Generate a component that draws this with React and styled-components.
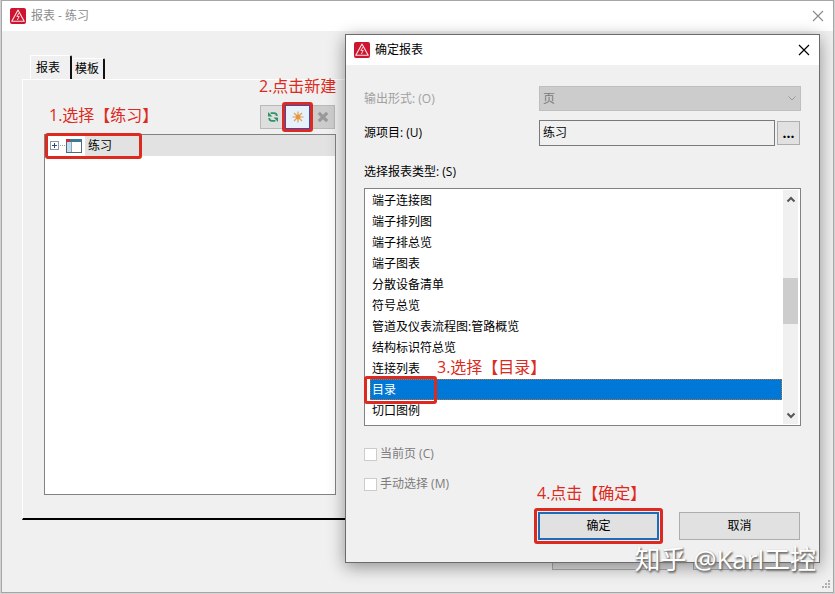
import React, { useState } from "react";
import styled, { createGlobalStyle, css } from "styled-components";

const GlobalStyle = createGlobalStyle`
  *, *::before, *::after { box-sizing: border-box; }
  body { margin: 0; background: #d2d2d2; }
  body, button, input, select {
    font-family: "Open Sans", "Noto Sans CJK SC", sans-serif;
    font-size: 12px;
    line-height: 18px;
  }
  body, button { color: #000; }
  h1, h2, ul { margin: 0; padding: 0; font: inherit; list-style: none; }
`;

const RED = "#dc2a20";

const MainWindow = styled.main`
  position: relative;
  display: flex;
  flex-direction: column;
  height: calc(100vh - 1px);
  min-height: 592px;
  margin: 0 1px 1px;
  border: 1px solid #a6a6a6;
  background: #f0f0f0;
  overflow: hidden;
`;

const TitleBar = styled.header`
  display: flex;
  align-items: center;
  gap: 5px;
  height: 30px;
  padding: 0 7px 0 8px;
  background: #fff;
  color: ${(p) => (p.$inactive ? "#8c8c8c" : "#000")};
  flex: none;
`;

const Title = styled.h1`
  flex: 1;
`;

const CloseButton = styled.button`
  display: flex;
  padding: 2px;
  border: 0;
  background: none;
  color: inherit;
`;

const Content = styled.div`
  display: flex;
  flex-direction: column;
  flex: 1;
  padding: 24px 19px 22px 20px;
`;

const TabStrip = styled.div`
  display: flex;
  align-items: flex-end;
  height: 24px;
  padding-left: 8px;
`;

const Tab = styled.button`
  height: ${(p) => (p.$active ? 24 : 21)}px;
  padding: ${(p) => (p.$active ? "0 10px 0 5px" : "0 4px 0 3px")};
  border: solid #fff;
  border-width: 1px 2px 0 ${(p) => (p.$active ? 1 : 0)}px;
  border-right-color: #111;
  border-radius: 2px 2px 0 0;
  background: #f0f0f0;
`;

const TabPanel = styled.section`
  display: grid;
  grid-template-columns: 292px 1fr;
  flex: 1;
  padding: 25px 21px 23px;
  border: solid #fff;
  border-width: 1px;
  border-bottom: 2px solid #000;
`;

const TreePane = styled.div`
  display: flex;
  flex-direction: column;
  gap: 5px;
`;

const Toolbar = styled.div`
  display: flex;
  justify-content: flex-end;
  padding-right: 1px;
`;

const ToolButton = styled.button`
  position: relative;
  display: grid;
  place-items: center;
  width: 25px;
  height: 24px;
  padding: 0;
  border: 1px solid ${(p) => (p.$active ? "#3a4ab8" : "#b9b9b9")};
  background: ${(p) => (p.$active ? "#e6f1fb" : p.disabled ? "#cccccc" : "#dedede")};
  z-index: ${(p) => (p.$active ? 1 : 0)};
`;

const Tree = styled.ul`
  flex: 1;
  border: 1px solid #828282;
  background: #fff;
`;

const TreeItem = styled.li`
  position: relative;
  display: flex;
  align-items: center;
  height: 21px;
  padding-left: 5px;
`;

const TreeLabel = styled.span`
  flex: 1;
  height: 21px;
  margin-left: 2px;
  padding-left: 3px;
  line-height: 21px;
  background: #e2e2e2;
`;

const ExpandButton = styled.button`
  display: flex;
  padding: 0;
  border: 0;
  background: none;
`;

const Footer = styled.footer`
  display: flex;
  justify-content: flex-end;
  gap: 20px;
  padding-top: 22px;
`;

const PushButton = styled.button`
  position: relative;
  width: 121px;
  height: 28px;
  padding: 0;
  border: ${(p) => (p.$primary ? "2px solid #1c6cb8" : "1px solid #adadad")};
  background: #e1e1e1;
`;

/* Red highlight drawn around a control */
const Highlight = styled.span`
  position: absolute;
  inset: -4px;
  border: 3px solid ${RED};
  border-radius: 3px;
  pointer-events: none;
  ${(p) =>
    p.$target === "primary" && css`inset: -6px;`}
  ${(p) =>
    p.$target === "tree" && css`inset: -2px auto -3px 0; width: 97px;`}
  ${(p) =>
    p.$target === "option" && css`inset: -3px auto -4px -2px; width: 73px;`}
`;

const Note = styled.p`
  position: absolute;
  left: ${(p) => p.$x}px;
  top: ${(p) => p.$y}px;
  margin: 0;
  font-size: 16px;
  line-height: 24px;
  white-space: nowrap;
  color: ${RED};
  pointer-events: none;
`;

const Dialog = styled.section`
  position: absolute;
  z-index: 2;
  top: 33px;
  left: 343px;
  right: 13px;
  border: 1px solid #6b6b6b;
  background: #f0f0f0;
  box-shadow: 0 4px 16px rgba(0, 0, 0, 0.4);
`;

const Form = styled.form`
  display: flex;
  flex-direction: column;
  padding: 21px 18px 22px;
`;

const Fields = styled.div`
  display: grid;
  grid-template-columns: 175px 1fr;
  align-items: center;
  row-gap: 9px;
`;

const Label = styled.label`
  color: ${(p) => (p.$disabled ? "#a0a0a0" : "#000")};
`;

const ComboWrap = styled.div`
  display: grid;
  align-items: center;
  height: 25px;

  > * { grid-area: 1 / 1; }
  > svg { justify-self: end; margin-right: 4px; pointer-events: none; }
`;

const Combo = styled.select`
  appearance: none;
  width: 100%;
  height: 25px;
  padding: 0 20px 0 3px;
  border: 1px solid #bfbfbf;
  border-radius: 0;
  background: #ccc;
  color: #7a7a7a;
  opacity: 1;
`;

const ProjectField = styled.div`
  display: flex;
  align-items: center;
  gap: 2px;
  padding-right: 1px;
`;

const TextInput = styled.input`
  flex: 1;
  min-width: 0;
  height: 26px;
  padding: 0 3px 2px;
  border: 1px solid #7a7a7a;
  background: #f0f0f0;
`;

const BrowseButton = styled.button`
  display: grid;
  place-items: center;
  width: 23px;
  height: 24px;
  padding: 0;
  border: 1px solid #adadad;
  background: #e1e1e1;
  font-size: 14px;
  font-weight: 700;
`;

const ListLabel = styled.span`
  margin: 17px 0 7px;
`;

const ListBox = styled.div`
  display: flex;
  height: 238px;
  padding: 1px 2px 1px 1px;
  border: 1px solid #828282;
  background: #fff;
`;

const Options = styled.ul`
  flex: 1;
`;

const Option = styled.li`
  position: relative;
  height: 21px;
  margin-right: 1px;
  padding-left: 6px;
  line-height: 21px;
`;

const OptionFill = styled.div`
  margin-left: -2px;
  padding-left: 2px;
  height: 21px;
  ${(p) =>
    p.$selected &&
    css`
      background: #0078d7;
      color: #fff;
      outline: 1px dotted #b87333;
      outline-offset: -1px;
    `}
`;

const ScrollBar = styled.div`
  display: grid;
  grid-template-rows: 18px 70px 46px 1fr 18px;
  width: 15px;
  background: #f0f0f0;
`;

const ScrollArrow = styled.button`
  grid-row: ${(p) => (p.$end ? 5 : 1)};
  display: grid;
  place-items: center;
  padding: 0;
  border: 0;
  background: none;
`;

const ScrollThumb = styled.div`
  grid-row: 3;
  background: #cdcdcd;
`;

const Checks = styled.div`
  display: flex;
  flex-direction: column;
  gap: 10px;
  padding: 18px 0;
`;

const CheckLabel = styled.label`
  display: flex;
  align-items: center;
  gap: 3px;
  height: 20px;
  color: #7c7c7c;
`;

const CheckBox = styled.input`
  appearance: none;
  width: 13px;
  height: 13px;
  margin: 0;
  border: 1px solid #ccc;
  background: #fff;
`;

const Actions = styled.div`
  display: flex;
  justify-content: flex-end;
  gap: 20px;
  padding-right: 1px;
`;

const Watermark = styled.div`
  position: absolute;
  z-index: 3;
  right: 17px;
  bottom: 15px;
  font-size: 26px;
  line-height: 36px;
  white-space: nowrap;
  color: #fff;
  text-shadow: 1px 1px 2px #666, 1px 2px 2px #888;
  pointer-events: none;
`;

const ResizeGrip = styled.svg`
  position: absolute;
  right: 2px;
  bottom: 2px;
`;

const Logo = () => (
  <svg width="16" height="16" viewBox="0 0 16 16" aria-hidden="true">
    <rect width="16" height="16" rx="2" fill="#cf1430" />
    <path d="M8 2 L14.2 13.3 H1.8 Z" fill="none" stroke="#fbe4e7" strokeWidth="1.1" strokeLinejoin="round" />
    <path d="M9.2 4.8 L6.8 8.4 H9.2 L7.4 12" fill="none" stroke="#f8d5da" strokeWidth="1" />
  </svg>
);

const CloseIcon = () => (
  <svg width="12" height="12" viewBox="0 0 12 12" aria-hidden="true">
    <path d="M1 1 L11 11 M11 1 L1 11" stroke="currentColor" strokeWidth="1.2" />
  </svg>
);

const RefreshIcon = () => (
  <svg width="12" height="12" viewBox="0 0 12 12" aria-hidden="true" fill="none" stroke="#2f9368" strokeWidth="1.8">
    <path d="M3.6 2.2 H7 Q9.8 2.2 9.8 5" />
    <path d="M8.4 9.8 H5 Q2.2 9.8 2.2 7" />
    <path d="M1 1 V5.4 H5.4 Z M11 11 V6.6 H6.6 Z" fill="#2f9368" stroke="none" />
  </svg>
);

const SunIcon = () => (
  <svg width="12" height="12" viewBox="0 0 12 12" aria-hidden="true">
    <path d="M6 0.5 V11.5 M0.5 6 H11.5 M2 2 L10 10 M10 2 L2 10" stroke="#e2a052" strokeWidth="1.2" />
    <circle cx="6" cy="6" r="2.4" fill="#e9953a" />
  </svg>
);

const DeleteIcon = () => (
  <svg width="12" height="12" viewBox="0 0 12 12" aria-hidden="true">
    <path d="M1.8 1.8 L10.2 10.2 M10.2 1.8 L1.8 10.2" stroke="#999" strokeWidth="3.2" />
  </svg>
);

const PlusBox = () => (
  <svg width="16" height="9" viewBox="0 0 16 9" aria-hidden="true" shapeRendering="crispEdges">
    <rect x="0.5" y="0.5" width="8" height="8" fill="#fff" stroke="#8e99a3" />
    <path d="M2 4.5 H7 M4.5 2 V7" stroke="#274b80" />
    <path d="M10 4.5 H16" stroke="#999" strokeDasharray="1 1" />
  </svg>
);

const ProjectIcon = () => (
  <svg width="17" height="16" viewBox="0 0 17 16" aria-hidden="true" shapeRendering="crispEdges">
    <rect x="0.5" y="1.5" width="15" height="13" fill="#fff" stroke="#526a7b" />
    <rect x="1" y="1" width="15" height="3" fill="#397a99" />
    <rect x="1" y="4" width="4" height="10" fill="#c3deef" />
    <path d="M5.5 4 V14" stroke="#8aa5b5" />
    <rect y="1" width="4" height="3" fill="#d22b35" />
  </svg>
);

const Chevron = ({ up, color = "#555", weight = 2 }) => (
  <svg width="10" height="7" viewBox="0 0 10 7" aria-hidden="true">
    <path d={up ? "M1.5 5.5 L5 2 L8.5 5.5" : "M1.5 1.5 L5 5 L8.5 1.5"} fill="none" stroke={color} strokeWidth={weight} />
  </svg>
);

const REPORT_TYPES = [
  "端子连接图", "端子排列图", "端子排总览", "端子图表", "分散设备清单", "符号总览",
  "管道及仪表流程图:管路概览", "结构标识符总览", "连接列表", "目录", "切口图例",
];

export default function App() {
  const [selected, setSelected] = useState("目录");

  return (
    <>
      <GlobalStyle />
      <MainWindow>
        <TitleBar $inactive>
          <Logo />
          <Title>报表 - 练习</Title>
          <CloseButton aria-label="关闭窗口"><CloseIcon /></CloseButton>
        </TitleBar>
        <Content>
          <TabStrip role="tablist">
            <Tab role="tab" aria-selected="true" $active>报表</Tab>
            <Tab role="tab" aria-selected="false">模板</Tab>
          </TabStrip>
          <TabPanel role="tabpanel">
            <TreePane>
              <Toolbar>
                <ToolButton aria-label="刷新"><RefreshIcon /></ToolButton>
                <ToolButton aria-label="新建" $active>
                  <SunIcon />
                  <Highlight />
                </ToolButton>
                <ToolButton aria-label="删除" disabled><DeleteIcon /></ToolButton>
              </Toolbar>
              <Tree role="tree">
                <TreeItem role="treeitem" aria-selected="true">
                  <ExpandButton aria-label="展开"><PlusBox /></ExpandButton>
                  <ProjectIcon />
                  <TreeLabel>练习</TreeLabel>
                  <Highlight $target="tree" />
                </TreeItem>
              </Tree>
            </TreePane>
          </TabPanel>
          <Footer>
            <PushButton aria-label="设置" />
            <PushButton aria-label="关闭" />
          </Footer>
        </Content>
        <Note $x={47} $y={102}>1.选择【练习】</Note>
        <Note $x={257} $y={73}>2.点击新建</Note>

        <ResizeGrip width="10" height="10" viewBox="0 0 10 10" fill="#b0b0b0" aria-hidden="true">
          <path d="M7 0h2v2h-2z M7 3h2v2h-2z M7 6h2v2h-2z M4 3h2v2h-2z M4 6h2v2h-2z M1 6h2v2h-2z" />
        </ResizeGrip>

        <Dialog role="dialog" aria-labelledby="dialog-title">
          <TitleBar>
            <Logo />
            <Title as="h2" id="dialog-title">确定报表</Title>
            <CloseButton aria-label="关闭对话框"><CloseIcon /></CloseButton>
          </TitleBar>
          <Form onSubmit={(e) => e.preventDefault()}>
            <Fields>
              <Label htmlFor="output" $disabled>输出形式: (O)</Label>
              <ComboWrap>
                <Combo id="output" disabled><option>页</option></Combo>
                <Chevron color="#999" weight={1} />
              </ComboWrap>
              <Label htmlFor="project">源项目: (U)</Label>
              <ProjectField>
                <TextInput id="project" defaultValue="练习" readOnly />
                <BrowseButton type="button" aria-label="浏览">...</BrowseButton>
              </ProjectField>
            </Fields>
            <ListLabel id="types">选择报表类型: (S)</ListLabel>
            <ListBox>
              <Options role="listbox" aria-labelledby="types">
                {REPORT_TYPES.map((name) => (
                  <Option key={name} role="option" aria-selected={name === selected} onClick={() => setSelected(name)}>
                    <OptionFill $selected={name === selected}>{name}</OptionFill>
                    {name === selected && <Highlight $target="option" />}
                  </Option>
                ))}
              </Options>
              <ScrollBar>
                <ScrollArrow type="button" aria-label="向上滚动"><Chevron up /></ScrollArrow>
                <ScrollThumb />
                <ScrollArrow type="button" aria-label="向下滚动" $end><Chevron /></ScrollArrow>
              </ScrollBar>
            </ListBox>
            <Checks>
              <CheckLabel><CheckBox type="checkbox" disabled />当前页 (C)</CheckLabel>
              <CheckLabel><CheckBox type="checkbox" disabled />手动选择 (M)</CheckLabel>
            </Checks>
            <Actions>
              <PushButton type="submit" $primary>
                确定
                <Highlight $target="primary" />
              </PushButton>
              <PushButton type="button">取消</PushButton>
            </Actions>
          </Form>
          <Note $x={91} $y={320}>3.选择【目录】</Note>
          <Note $x={191} $y={446}>4.点击【确定】</Note>
        </Dialog>
        <Watermark>知乎 @Karl工控</Watermark>
      </MainWindow>
    </>
  );
}
